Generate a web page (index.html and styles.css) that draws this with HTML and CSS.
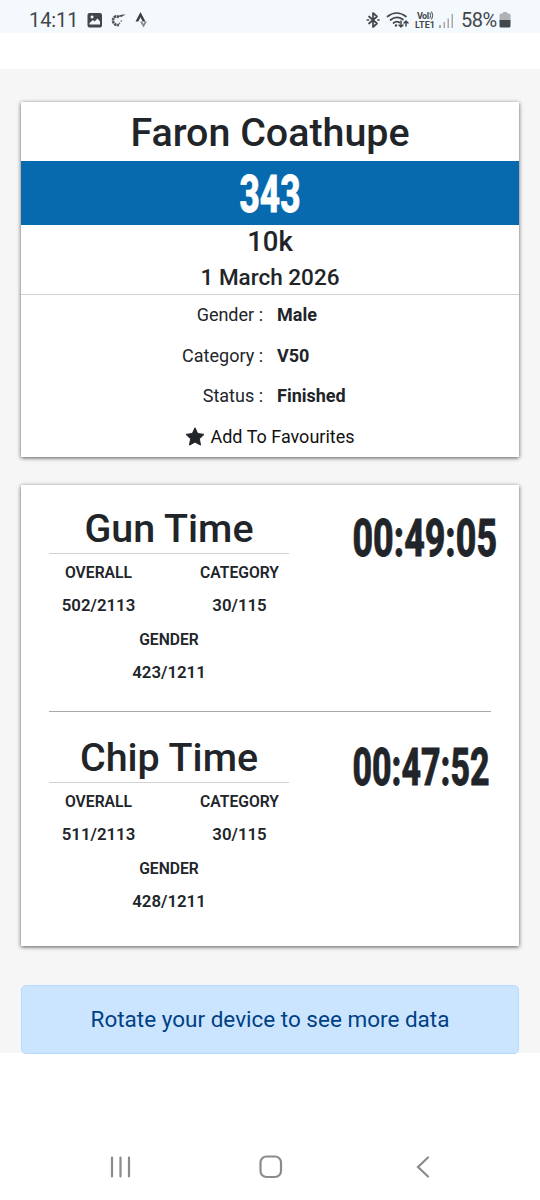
FILE: index.html
```html
<!DOCTYPE html>
<html lang="en">
<head>
<meta charset="utf-8">
<title>Race result</title>
<link rel="stylesheet" href="styles.css">
</head>
<body>
<header class="status">
  <span class="clock">14:11</span>
  <svg class="notices" width="62" height="20" viewBox="0 0 62 20">
    <path fill="#42474b" fill-rule="evenodd" d="M2.500 3h10.500q2 0 2 2v10.500q0 2-2 2h-10.500q-2 0-2-2v-10.500q0-2 2-2zM2.500 14.500h10.500v-3l-2.500-3-3 3-1.500-1.500-3.500 3zM5 5.500a1.500 1.500 0 1 0 .1 0z"/>
    <path fill="none" stroke="#4f5357" stroke-width="2.600" stroke-dasharray="2.400 .6" d="M32 7c-4-2-6 1-6 3.500s2 5 6 4.500"/>
    <path fill="#4f5357" d="M30 8c2-3 4-4 9-3.500-2 .5-3 2-5 2.500-2-.5-2 .5-4 1z"/>
    <path fill="none" stroke="#777" stroke-width="1.500" stroke-dasharray="1.500 1.500" d="M32 14l3-4"/>
    <path fill="#3c4145" d="M53.500 2l5 9.500h-2.800l-2.200-4.300-2.200 4.300h-2.800z"/>
    <path fill="#888c8f" d="M53 11.500h2.300l1.200 2.400 1.200-2.400h2.300l-3.500 6z"/>
  </svg>
  <svg class="signals" width="92" height="24" viewBox="0 0 92 24">
    <g fill="none" stroke="#42474b" stroke-width="1.700" stroke-linecap="round" stroke-linejoin="round">
      <path d="M4 8.500l8 7-4 3.500v-14l4 3.500-8 7M2.300 12h1.200M13 12h1"/>
      <path d="M22.500 8.500q9-7 18.500 0M25.500 12q6-5 12.500-.5M28.500 15q3-2.500 6-.5"/>
      <path stroke-width="1.500" d="M36 13v6m-2-2l2 2 2-2M41 18v-5m-2 2l2-2 2 2"/>
    </g>
    <circle cx="31" cy="17.500" r="1.200" fill="#42474b"/>
    <g class="volte" fill="#42474b">
      <text x="52" y="11" textLength="10">Vo</text>
      <path d="M63 4v7" stroke="#42474b" stroke-width="1.300"/>
      <path d="M64.800 4.500q1.500 3 0 6M66.600 3.500q2.200 4 0 8" fill="none" stroke="#42474b" stroke-width="1"/>
      <text x="50" y="20" textLength="20">LTE1</text>
    </g>
    <g fill="#a5a9ac"><path d="M74 17h2v3h-2zM78.500 14h1.500v6h-1.500zM82.500 10.500h1.500v9.500h-1.500zM86.500 6h1.500v14h-1.500z"/></g>
  </svg>
  <span class="percent">58%</span>
  <svg class="battery" width="12" height="16" viewBox="0 0 12 16"><path fill="#aeb2b5" d="M4 0h4v1.500h2q1.500 0 1.500 1.500v6h-11v-6q0-1.500 1.500-1.500h2z"/><path fill="#42474b" d="M.5 8h11v6q0 1.500-1.500 1.500h-8q-1.500 0-1.500-1.500z"/></svg>
</header>
<main class="page">
  <section class="card runner">
    <h1 class="name">Faron Coathupe</h1>
    <div class="bib"><svg width="62" height="64"><text class="digits" x="0.500" y="51" textLength="61" lengthAdjust="spacingAndGlyphs">343</text></svg></div>
    <div class="distance">10k</div>
    <div class="date">1 March 2026</div>
    <dl class="facts">
      <dt>Gender :</dt><dd>Male</dd>
      <dt>Category :</dt><dd>V50</dd>
      <dt>Status :</dt><dd>Finished</dd>
    </dl>
    <div class="favourite"><svg width="20" height="19" viewBox="0 0 20 19"><path fill="#212529" stroke="#212529" stroke-linejoin="round" d="M10 .8l2.700 5.700 6.300.9-4.600 4.400 1.100 6.300-5.500-3-5.500 3 1.100-6.300-4.600-4.400 6.300-.9z"/></svg><span>Add To Favourites</span></div>
  </section>
  <section class="card times">
    <div class="result">
      <div class="summary">
        <h2 class="title">Gun Time</h2>
        <div class="ranks">
          <div class="rank"><b>OVERALL</b><span>502/2113</span></div>
          <div class="rank"><b>CATEGORY</b><span>30/115</span></div>
          <div class="rank wide"><b>GENDER</b><span>423/1211</span></div>
        </div>
      </div>
      <svg class="time" width="156" height="76"><text class="digits" x="3.500" y="55" textLength="144.500" lengthAdjust="spacingAndGlyphs">00:49:05</text></svg>
    </div>
    <div class="result">
      <div class="summary">
        <h2 class="title">Chip Time</h2>
        <div class="ranks">
          <div class="rank"><b>OVERALL</b><span>511/2113</span></div>
          <div class="rank"><b>CATEGORY</b><span>30/115</span></div>
          <div class="rank wide"><b>GENDER</b><span>428/1211</span></div>
        </div>
      </div>
      <svg class="time" width="156" height="76"><text class="digits" x="3.500" y="55" textLength="137" lengthAdjust="spacingAndGlyphs">00:47:52</text></svg>
    </div>
  </section>
  <div class="notice">Rotate your device to see more data</div>
</main>
<nav class="system">
  <svg width="22" height="22" viewBox="0 0 22 22"><path fill="none" stroke="#8b8b8b" stroke-width="2.200" stroke-linecap="round" d="M2 1.500v19M10.500 1.500v19M19 1.500v19"/></svg>
  <svg width="24" height="24" viewBox="0 0 24 24"><rect x="1.500" y="1.500" width="20.500" height="20.500" rx="6" fill="none" stroke="#8b8b8b" stroke-width="2.200"/></svg>
  <svg width="14" height="22" viewBox="0 0 14 22"><path fill="none" stroke="#8b8b8b" stroke-width="2.200" stroke-linecap="round" d="M12 1.500l-10 9.500 10 9.500"/></svg>
</nav>
</body>
</html>
```
FILE: styles.css
```css
* { box-sizing: border-box; }
body { margin: 0; height: 1200px; background: #fff; color: #212529; font-family: Roboto, "Liberation Sans", sans-serif; overflow: hidden; }
h1, h2, dl, dd { margin: 0; }
h1, h2 { font-weight: 500; }
svg { display: block; flex: none; overflow: visible; }
.status { height: 33px; background: #f4f9fe; display: flex; align-items: center; padding: 7px 0 0 29px; color: #42474b; font-size: 20px; }
.status > * { margin-top: -1px; }
.clock { width: 49px; letter-spacing: -.1px; }
.notices { margin-left: 9px; }
.signals { margin-left: 216px; }
.volte { font-size: 9px; font-weight: 700; }
.percent { width: 37px; margin-left: 4px; letter-spacing: -.5px; }
.battery { margin-left: 1px; }
.page { margin-top: 36px; height: 984px; padding: 33px 21px 0; background: #f6f6f6; }
.card { background: #fff; box-shadow: 0 1px 4px rgba(0, 0, 0, .65); }
.runner { height: 355px; text-align: center; }
.name { height: 59px; line-height: 62px; font-size: 39.400px; }
.bib { height: 64px; background: #0769ae; color: #fff; display: flex; justify-content: center; }
.digits { font-size: 51.500px; font-weight: 800; fill: currentColor; stroke: currentColor; stroke-width: .8px; }
.distance { height: 34px; line-height: 34px; font-size: 27.500px; font-weight: 500; }
.date { height: 36px; line-height: 36px; font-size: 22.500px; font-weight: 500; border-bottom: 1px solid #d2d2d2; }
.facts { display: grid; grid-template-columns: 242px 1fr; column-gap: 14px; grid-auto-rows: 40.500px; line-height: 40px; font-size: 18px; }
.facts dt { text-align: right; }
.facts dd { text-align: left; font-weight: 700; }
.favourite { height: 40px; display: flex; align-items: center; justify-content: center; gap: 5px; font-size: 18px; color: #111; }
.times { height: 461px; margin-top: 28px; padding: 0 28px; }
.result { display: flex; height: 227px; border-bottom: 1px solid #aaa; }
.result + .result { margin-top: 2px; border: 0; }
.summary { width: 240px; }
.title { height: 69px; padding-top: 21px; line-height: 46px; font-size: 39.400px; text-align: center; border-bottom: 1px solid #d2d2d2; }
.ranks { display: flex; flex-wrap: wrap; width: 282px; margin-left: -21px; }
.rank { width: 141px; display: flex; flex-direction: column; align-items: center; font-size: 16.800px; font-weight: 600; line-height: 33px; padding-top: 2px; height: 67px; }
.rank b { font-size: 15.700px; font-weight: 600; }
.rank.wide { width: 100%; }
.time { margin: 16px 0 0 60px; }
.notice { height: 69px; margin-top: 39px; border: 1px solid #b8daff; border-radius: 5px; background: #cce5ff; color: #004085; font-size: 22.500px; line-height: 67px; text-align: center; }
.system { height: 147px; display: flex; padding: 81px 0 0 110px; align-items: center; }
.system svg:nth-child(2) { margin-left: 127px; }
.system svg:nth-child(3) { margin-left: 133px; }
```
